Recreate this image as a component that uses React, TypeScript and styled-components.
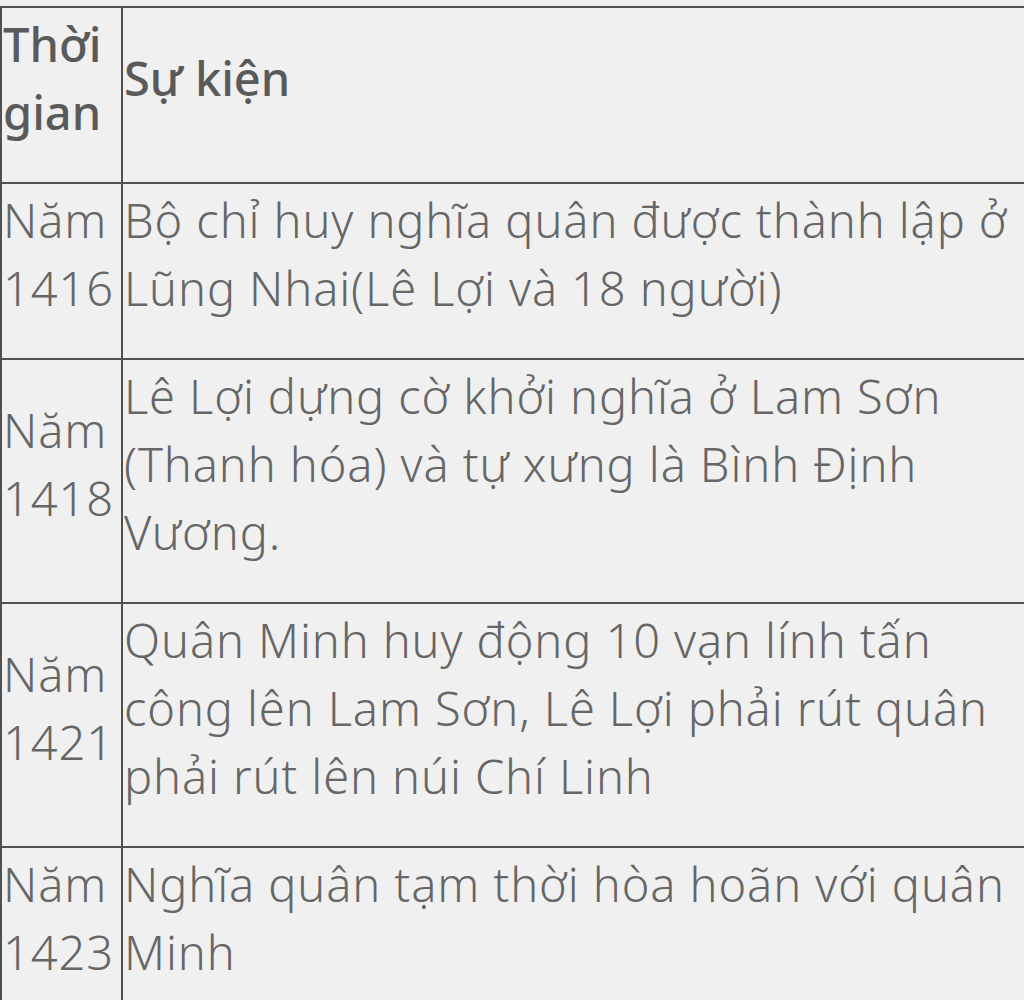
import styled, { createGlobalStyle } from "styled-components";

const GlobalStyle = createGlobalStyle`
  html, body {
    margin: 0;
    padding: 0;
    background: #f0f0f0;
    overflow: hidden;
  }
`;

const Page = styled.div`
  width: 1024px;
  height: 1000px;
  overflow: hidden;
  padding-top: 6px;
  box-sizing: border-box;
  background: #f0f0f0;
`;

const Table = styled.table`
  border-collapse: collapse;
  width: 1080px;
  table-layout: fixed;
  font-family: "Noto Sans", "Open Sans", sans-serif;
  font-size: 47px;
  line-height: 68px;
  color: #666666;
`;

const Cell = styled.td<{ $head?: boolean; $narrow?: boolean }>`
  border: 2px solid #505050;
  padding: 2px 1px 36px 1px;
  vertical-align: middle;
  white-space: nowrap;
  font-weight: ${({ $head }) => ($head ? 500 : 300)};
  letter-spacing: ${({ $head }) => ($head ? "0" : "0.9px")};
  color: ${({ $head }) => ($head ? "#5a5a5a" : "#666666")};
  width: ${({ $narrow }) => ($narrow ? "117px" : "auto")};
`;

type Row = { year: string[]; lines: string[] };

const rows: Row[] = [
  {
    year: ["Năm", "1416"],
    lines: ["Bộ chỉ huy nghĩa quân được thành lập ở", "Lũng Nhai(Lê Lợi và 18 người)"],
  },
  {
    year: ["Năm", "1418"],
    lines: [
      "Lê Lợi dựng cờ khởi nghĩa ở Lam Sơn",
      "(Thanh hóa) và tự xưng là Bình Định",
      "Vương.",
    ],
  },
  {
    year: ["Năm", "1421"],
    lines: [
      "Quân Minh huy động 10 vạn lính tấn",
      "công lên Lam Sơn, Lê Lợi phải rút quân",
      "phải rút lên núi Chí Linh",
    ],
  },
  {
    year: ["Năm", "1423"],
    lines: ["Nghĩa quân tạm thời hòa hoãn với quân", "Minh"],
  },
];

function Lines({ items }: { items: string[] }) {
  return (
    <>
      {items.map((t, i) => (
        <span key={i}>
          {t}
          {i < items.length - 1 && <br />}
        </span>
      ))}
    </>
  );
}

export default function App() {
  return (
    <Page>
      <GlobalStyle />
      <Table>
        <tbody>
          <tr>
            <Cell $head $narrow>
              <Lines items={["Thời", "gian"]} />
            </Cell>
            <Cell $head>Sự kiện</Cell>
          </tr>
          {rows.map((r) => (
            <tr key={r.year[1]}>
              <Cell $narrow>
                <Lines items={r.year} />
              </Cell>
              <Cell>
                <Lines items={r.lines} />
              </Cell>
            </tr>
          ))}
        </tbody>
      </Table>
    </Page>
  );
}
